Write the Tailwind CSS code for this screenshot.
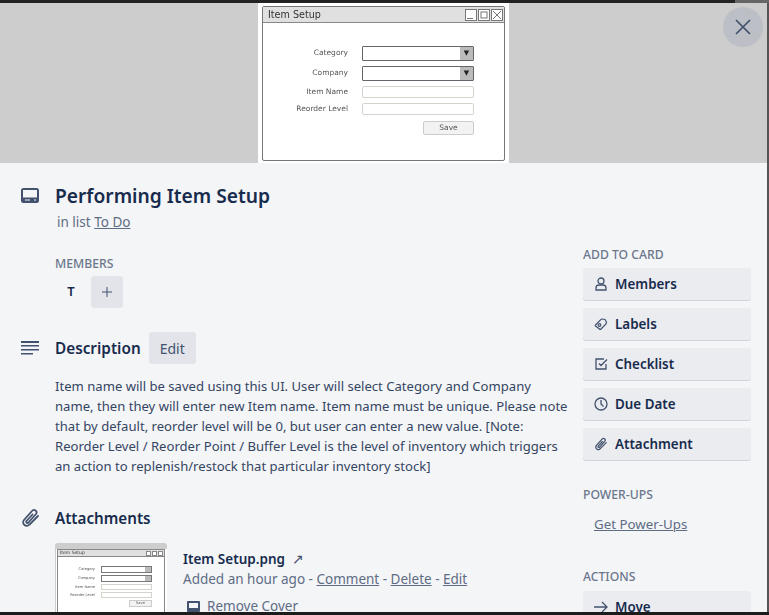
<!DOCTYPE html>
<html lang="en">
  <head>
    <meta charset="UTF-8" />
    <title>card</title>
    <script src="https://cdn.jsdelivr.net/npm/@tailwindcss/browser@4"></script>
  </head>
  <body class="w-[769px] h-[615px] overflow-hidden flex flex-col bg-[#1c1c1c] font-['Noto_Sans',sans-serif] text-[14px] text-[#172b4d]">
    <!-- Strip of the page behind the window -->
    <div class="h-[3px] shrink-0 flex">
      <div class="w-[735px] bg-[#222]"></div>
      <div class="flex-1 bg-[#666]"></div>
    </div>
    <div class="h-[609px] shrink-0 flex bg-[#555]">
      <div class="relative w-[767px] h-[609px] bg-[#f4f5f7] overflow-hidden">
        <!-- Cover -->
        <div class="h-[160px] bg-[#cdcdcd] flex justify-center">
          <div class="w-[251px] h-[160px] bg-white px-[4px] pt-[3px] pb-[2px] blur-[0.35px] font-['DejaVu_Sans',sans-serif]">
            <div class="h-full border-[1.5px] border-[#777] rounded-[2px] bg-white">
              <div class="h-[16px] bg-[#e0e0e0] border-b border-[#888] flex items-center justify-between pl-[5px] pr-[1px]">
                <span class="text-[9.6px] leading-none text-[#333]">Item Setup</span>
                <div class="flex gap-[1px]">
                  <svg width="12" height="12" viewBox="0 0 12 12" fill="#fff" stroke="#777"><rect x="0.5" y="0.5" width="11" height="11" /><path d="M2 9.500h6" /></svg>
                  <svg width="12" height="12" viewBox="0 0 12 12" fill="#fff" stroke="#777"><rect x="0.5" y="0.5" width="11" height="11" /><rect x="3" y="3" width="6" height="6" /></svg>
                  <svg width="12" height="12" viewBox="0 0 12 12" fill="#fff" stroke="#777"><rect x="0.5" y="0.5" width="11" height="11" /><path d="M2 2l8 8M10 2l-8 8" /></svg>
                </div>
              </div>
              <div class="grid grid-cols-[85px_112px] gap-x-[14px] pt-[23px] text-[7.5px] text-[#555] items-center">
                <span class="text-right h-[15px] leading-[14px]">Category</span>
                <div class="h-[15px] border border-[#666] rounded-[1px] flex justify-end"><span class="w-[13px] bg-[#bbb] text-[7px] leading-[13px] text-center text-[#222]">▼</span></div>
                <span class="text-right h-[15px] leading-[14px] mt-[5px]">Company</span>
                <div class="h-[15px] border border-[#666] rounded-[1px] flex justify-end mt-[5px]"><span class="w-[13px] bg-[#bbb] text-[7px] leading-[13px] text-center text-[#222]">▼</span></div>
                <span class="text-right h-[12px] leading-[12px] mt-[5px]">Item Name</span>
                <div class="h-[12px] border border-[#d4d4cc] rounded-[2px] mt-[5px]"></div>
                <span class="text-right h-[12px] leading-[12px] mt-[5px]">Reorder Level</span>
                <div class="h-[12px] border border-[#d4d4cc] rounded-[2px] mt-[5px]"></div>
                <span class="mt-[6px]"></span>
                <div class="flex justify-end mt-[6px]"><span class="w-[51px] h-[14px] border border-[#ccc] rounded-[2px] bg-[#f2f2f2] leading-[12px] text-center">Save</span></div>
              </div>
            </div>
          </div>
        </div>
        <!-- Close -->
        <button class="absolute top-[4px] right-[4px] w-[40px] h-[40px] rounded-full bg-[#bcbfc5] flex items-center justify-center">
          <svg width="16" height="16" viewBox="0 0 16 16" fill="none" stroke="#42526e" stroke-width="1.7"><path d="M1 1l14 14M15 1L1 15" /></svg>
        </button>
        <!-- Body -->
        <div class="flex">
          <div class="w-[583px] shrink-0">
            <div class="flex pl-[21px] pt-[20px]">
              <svg class="mt-[5px] mr-[16px]" width="18" height="15" viewBox="0 0 18 15" fill="#42526e" fill-rule="evenodd"><path d="M2.500 0h13A2.500 2.500 0 0 1 18 2.500v10a2.500 2.500 0 0 1-2.500 2.500h-13A2.500 2.500 0 0 1 0 12.500v-10A2.500 2.500 0 0 1 2.500 0zM2 2v7.500h14V2zM4 11.500v1h5v-1zM13 11.500v1h2v-1z" /></svg>
              <div>
                <h1 class="text-[19.2px] leading-[26px] font-semibold">Performing Item Setup</h1>
                <p class="pl-[2px] pt-[3px] text-[13.5px] leading-[20px] text-[#5e6c84]">in list <span class="underline">To Do</span></p>
              </div>
            </div>
            <div class="pl-[55px] pt-[24px]">
              <h3 class="text-[12.2px] leading-[16px] font-medium text-[#6b778c]">MEMBERS</h3>
              <div class="flex items-center mt-[4px]">
                <span class="w-[32px] h-[32px] flex items-center justify-center font-semibold text-[13px] mr-[4px]">T</span>
                <span class="w-[32px] h-[32px] bg-[#e2e4ea] rounded-[3px] flex items-center justify-center">
                  <svg width="10" height="10" viewBox="0 0 10 10" stroke="#42526e"><path d="M5 0v10M0 5h10" /></svg>
                </span>
              </div>
            </div>
            <div class="flex pl-[21px] pt-[24px] items-center">
              <svg class="mr-[16px]" width="18" height="14" viewBox="0 0 18 14" fill="#42526e"><path d="M0 0h18v2H0zM0 4h18v1.500H0zM0 8h18v1.500H0zM0 12h12v1.500H0z" /></svg>
              <h2 class="text-[15.3px] leading-[20px] font-semibold">Description</h2>
              <span class="ml-[8px] w-[47px] h-[32px] bg-[#e2e4ea] rounded-[3px] flex items-center justify-center text-[#42526e]">Edit</span>
            </div>
            <p class="pl-[55px] pr-[14px] pt-[12px] text-[13.1px] leading-[20px] text-[#344563]">Item name will be saved using this UI. User will select Category and Company name, then they will enter new Item name. Item name must be unique. Please note that by default, reorder level will be 0, but user can enter a new value. [Note: Reorder Level / Reorder Point / Buffer Level is the level of inventory which triggers an action to replenish/restock that particular inventory stock]</p>
            <div class="flex pl-[21px] pt-[32px] items-center">
              <svg class="mr-[15px]" width="19" height="20" viewBox="0 0 19 20" fill="none" stroke="#42526e" stroke-width="1.800" stroke-linecap="round"><path d="M17 8 8.500 16.500a3.500 3.500 0 0 1-5.500-4.500L11 3a2.500 2.500 0 0 1 4 3l-7.500 8.500a1 1 0 0 1-2-1.500l6-6.500" /></svg>
              <h2 class="text-[15.2px] leading-[20px] font-semibold">Attachments</h2>
            </div>
            <div class="flex pl-[55px] pt-[15px]">
              <!-- Thumbnail -->
              <div class="w-[112px] h-[80px] bg-[#cdcdcd] rounded-t-[3px] shrink-0 pt-[6px] pl-[1px] overflow-hidden">
                <div class="w-[111px] h-[74px] bg-white pl-[1px] pr-[2px] blur-[0.3px] font-['DejaVu_Sans',sans-serif]">
                  <div class="h-full border border-[#888] bg-white">
                    <div class="h-[7px] bg-[#e0e0e0] border-b border-[#888] flex items-center justify-between pl-[2px] pr-[1px]">
                      <span class="text-[4.5px] leading-none text-[#333]">Item Setup</span>
                      <div class="flex gap-[1px]">
                        <span class="w-[5px] h-[5px] border border-[#888] bg-white"></span>
                        <span class="w-[5px] h-[5px] border border-[#888] bg-white"></span>
                        <span class="w-[5px] h-[5px] border border-[#888] bg-white"></span>
                      </div>
                    </div>
                    <div class="grid grid-cols-[37px_51px] gap-x-[6px] gap-y-[2px] pt-[9px] text-[3.6px] leading-[5px] text-[#555] items-center">
                      <span class="text-right">Category</span>
                      <div class="h-[7px] border border-[#777] flex justify-end"><span class="w-[6px] bg-[#bbb]"></span></div>
                      <span class="text-right">Company</span>
                      <div class="h-[7px] border border-[#777] flex justify-end"><span class="w-[6px] bg-[#bbb]"></span></div>
                      <span class="text-right">Item Name</span>
                      <div class="h-[6px] border border-[#d4d4cc]"></div>
                      <span class="text-right">Reorder Level</span>
                      <div class="h-[6px] border border-[#d4d4cc]"></div>
                      <span></span>
                      <div class="flex justify-end"><span class="w-[23px] h-[7px] border border-[#ccc] bg-[#f2f2f2] text-center">Save</span></div>
                    </div>
                  </div>
                </div>
              </div>
              <div class="pl-[16px] pt-[6px]">
                <p class="text-[13.5px] font-semibold leading-[20px]">Item Setup.png <span class="pl-[4px] font-normal text-[#42526e]">↗</span></p>
                <p class="text-[13.5px] leading-[20px] text-[#5e6c84]">Added an hour ago - <span class="underline">Comment</span> - <span class="underline">Delete</span> - <span class="underline">Edit</span></p>
                <p class="flex items-center text-[13.5px] leading-[20px] mt-[7px] pl-[4px] text-[#5e6c84]">
                  <svg class="mr-[7px]" width="13" height="11" viewBox="0 0 13 11" fill="#42526e" fill-rule="evenodd"><path d="M1 0h11a1 1 0 0 1 1 1v9a1 1 0 0 1-1 1H1a1 1 0 0 1-1-1V1a1 1 0 0 1 1-1zm1 2v5h9V2z" /></svg>
                  <span class="underline">Remove Cover</span>
                </p>
              </div>
            </div>
          </div>
          <!-- Sidebar -->
          <div class="w-[168px] pt-[84px]">
            <h3 class="text-[12.2px] leading-[16px] font-medium text-[#6b778c]">ADD TO CARD</h3>
            <div class="flex flex-col gap-[8px] mt-[5px]">
              <div class="h-[32px] bg-[#ebecf0] rounded-[3px] shadow-[0_1px_0_#d0d4dc] flex items-center pl-[11px] font-semibold text-[13.4px]">
                <svg class="mr-[7px]" width="14" height="14" viewBox="0 0 14 14" fill="none" stroke="#42526e" stroke-width="1.300"><circle cx="7" cy="4" r="3" /><path d="M2 13v-2a3 3 0 0 1 3-3h4a3 3 0 0 1 3 3v2z" /></svg>Members
              </div>
              <div class="h-[32px] bg-[#ebecf0] rounded-[3px] shadow-[0_1px_0_#d0d4dc] flex items-center pl-[11px] font-semibold text-[13.4px]">
                <svg class="mr-[7px]" width="14" height="14" viewBox="0 0 14 14" fill="none" stroke="#42526e" stroke-width="1.200"><path d="M1.500 8 7 2.500a1 1 0 0 1 1-.5l3 .5 1.500 2.500-.5 2-5 5a1 1 0 0 1-1.500 0L1.500 9a.7.7 0 0 1 0-1z" /><circle cx="5.500" cy="8" r="1.300" /></svg>Labels
              </div>
              <div class="h-[32px] bg-[#ebecf0] rounded-[3px] shadow-[0_1px_0_#d0d4dc] flex items-center pl-[11px] font-semibold text-[13.4px]">
                <svg class="mr-[7px]" width="14" height="14" viewBox="0 0 14 14" fill="none" stroke="#42526e" stroke-width="1.300"><path d="M12 7v5H2V2h8M5 6.500l2 2L13 2.500" /></svg>Checklist
              </div>
              <div class="h-[32px] bg-[#ebecf0] rounded-[3px] shadow-[0_1px_0_#d0d4dc] flex items-center pl-[11px] font-semibold text-[13.4px]">
                <svg class="mr-[7px]" width="14" height="14" viewBox="0 0 14 14" fill="none" stroke="#42526e" stroke-width="1.300"><circle cx="7" cy="7" r="6" /><path d="M7 3v4l2.500 2.500" /></svg>Due Date
              </div>
              <div class="h-[32px] bg-[#ebecf0] rounded-[3px] shadow-[0_1px_0_#d0d4dc] flex items-center pl-[11px] font-semibold text-[13.4px]">
                <svg class="mr-[7px]" width="14" height="14" viewBox="0 0 19 20" fill="none" stroke="#42526e" stroke-width="1.800" stroke-linecap="round"><path d="M17 8 8.500 16.500a3.500 3.500 0 0 1-5.500-4.500L11 3a2.500 2.500 0 0 1 4 3l-7.500 8.500a1 1 0 0 1-2-1.500l6-6.500" /></svg>Attachment
              </div>
            </div>
            <h3 class="mt-[27px] text-[12.2px] leading-[16px] font-medium text-[#6b778c]">POWER-UPS</h3>
            <p class="mt-[11px] pl-[11px] text-[13.3px] leading-[20px] text-[#5e6c84] underline">Get Power-Ups</p>
            <h3 class="mt-[35px] text-[12.2px] leading-[16px] font-medium text-[#6b778c]">ACTIONS</h3>
            <div class="h-[32px] mt-[6px] bg-[#ebecf0] rounded-[3px] flex items-center pl-[11px] font-semibold text-[13.4px]">
              <svg class="mr-[7px]" width="14" height="12" viewBox="0 0 14 12" fill="none" stroke="#42526e" stroke-width="1.300"><path d="M0 6h13M8 1l5 5-5 5" /></svg>Move
            </div>
          </div>
        </div>
      </div>
    </div>
  </body>
</html>
